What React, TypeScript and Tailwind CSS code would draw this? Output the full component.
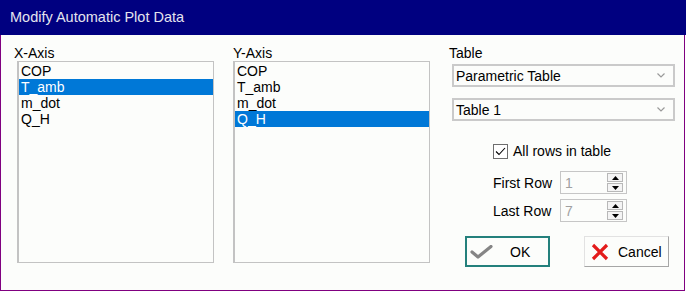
import React from "react"

const FONT = { fontFamily: '"Liberation Sans", Arial, sans-serif' }

const vars = ["COP", "T_amb", "m_dot", "Q_H"]

function ListBox({ selected }: { selected: string }) {
  return (
    <div className="w-[197px] h-[202px] bg-[#fcfdfb] border-l-2 border-t border-r border-b border-[#c3c3c3] pt-[1px]">
      {vars.map((v) => (
        <div
          key={v}
          className={
            v === selected
              ? "h-4 leading-4 pl-[2px] bg-[#0078d7] text-white"
              : "h-4 leading-4 pl-[2px] text-black"
          }
        >
          {v}
        </div>
      ))}
    </div>
  )
}

function Combo({ label }: { label: string }) {
  return (
    <div className="ml-[3px] w-[223px] h-[23px] border-2 border-[#cacaca] bg-[#fcfdfb] flex items-center pl-[2px] pr-[8px]">
      <span className="flex-1 leading-4">{label}</span>
      <svg width="8" height="5" viewBox="0 0 8 5">
        <path d="M0.5 0.5 L4 4 L7.5 0.5" fill="none" stroke="#9a9a9a" strokeWidth="1.2" />
      </svg>
    </div>
  )
}

function Spinner({ value }: { value: string }) {
  return (
    <div className="w-[67px] h-[23px] border border-[#c6c6c6] bg-[#fcfdfb] flex items-center pl-[4px] pr-[3px]">
      <span className="flex-1 text-[#a0a0a0] leading-4">{value}</span>
      <div className="flex flex-col gap-[1px]">
        <div className="w-[16px] h-[9px] border border-[#b8b8b8] bg-[#f4f4f4] flex items-center justify-center">
          <svg width="7" height="4" viewBox="0 0 7 4">
            <path d="M3.5 0 L7 4 L0 4 Z" fill="#000" />
          </svg>
        </div>
        <div className="w-[16px] h-[9px] border border-[#b8b8b8] bg-[#f4f4f4] flex items-center justify-center">
          <svg width="7" height="4" viewBox="0 0 7 4">
            <path d="M0 0 L7 0 L3.5 4 Z" fill="#000" />
          </svg>
        </div>
      </div>
    </div>
  )
}

export default function App() {
  return (
    <div className="w-[686px] h-[291px] bg-white flex flex-col text-[14px] text-black" style={FONT}>
      {/* title bar */}
      <div className="h-[35px] bg-[#000080] flex items-center pl-[10px] text-[14.5px] text-[#e4e4ee]">
        Modify Automatic Plot Data
      </div>

      <div className="flex-1 flex bg-[#fcfdfb] border-l border-r border-b border-[#800080] mr-[1px] pt-[10px]">
        {/* X axis */}
        <div className="ml-[13px] flex flex-col">
          <div className="h-4 leading-4">X-Axis</div>
          <div className="ml-[3px]">
            <ListBox selected="T_amb" />
          </div>
        </div>

        {/* Y axis */}
        <div className="ml-[19px] flex flex-col">
          <div className="h-4 leading-4">Y-Axis</div>
          <ListBox selected="Q_H" />
        </div>

        {/* table options */}
        <div className="ml-[19px] w-[227px] flex flex-col">
          <div className="h-4 leading-4">Table</div>
          <div className="mt-[3px]">
            <Combo label="Parametric Table" />
          </div>
          <div className="mt-[11px]">
            <Combo label="Table 1" />
          </div>

          <div className="mt-[22px] ml-[44px] h-4 flex items-center gap-[5px]">
            <div className="w-[15px] h-[15px] border border-[#6e6e6e] bg-white flex items-center justify-center">
              <svg width="11" height="9" viewBox="0 0 11 9">
                <path d="M1 4.5 L4 7.5 L10 1" fill="none" stroke="#000" strokeWidth="1.1" />
              </svg>
            </div>
            <span className="leading-4">All rows in table</span>
          </div>

          <div className="mt-[12px] ml-[44px] flex items-center">
            <span className="w-[67px] leading-4">First Row</span>
            <Spinner value="1" />
          </div>
          <div className="mt-[5px] ml-[44px] flex items-center">
            <span className="w-[67px] leading-4">Last Row</span>
            <Spinner value="7" />
          </div>

          <div className="mt-[14px] ml-[16px] flex gap-[34px]">
            <button className="w-[85px] h-[31px] border-2 border-[#24807c] bg-[#fcfdfb] flex items-center pl-[3px]">
              <svg width="24" height="14" viewBox="0 0 24 14">
                <path d="M2 7 L8 12 L21 1.5" fill="none" stroke="#858585" strokeWidth="3.2" strokeLinecap="round" strokeLinejoin="round" />
              </svg>
              <span className="ml-[16px] leading-4">OK</span>
            </button>
            <button className="w-[85px] h-[31px] border border-t-[#e2e2e2] border-l-[#e2e2e2] border-r-[#a6a6a6] border-b-[#a6a6a6] bg-[#fcfdfb] flex items-center pl-[6px]">
              <svg width="18" height="18" viewBox="0 0 18 18">
                <path d="M2 2 L16 16 M16 2 L2 16" fill="none" stroke="#e31b1b" strokeWidth="3.2" />
              </svg>
              <span className="ml-[9px] leading-4">Cancel</span>
            </button>
          </div>
        </div>
      </div>
    </div>
  )
}
